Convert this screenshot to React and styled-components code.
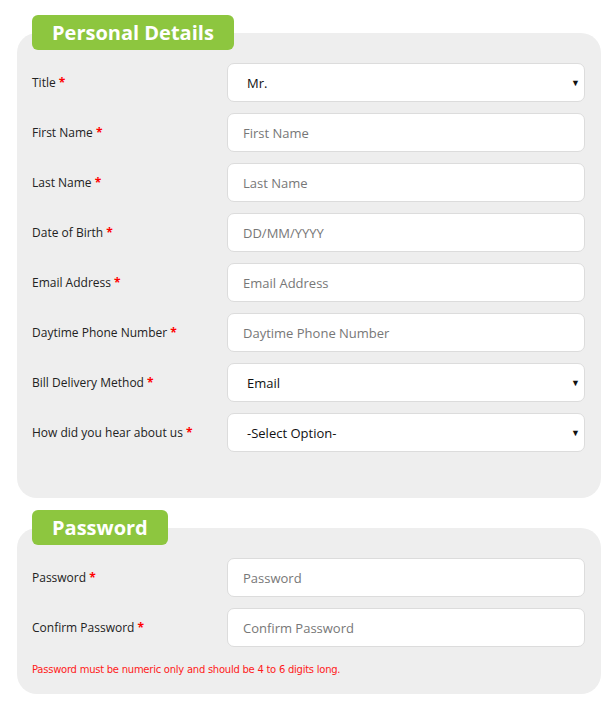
import React from "react";
import styled, { createGlobalStyle } from "styled-components";

const Global = createGlobalStyle`
  html, body { margin: 0; padding: 0; background: #fff; }
  body { font-family: "Open Sans", "Liberation Sans", sans-serif; }
  * { box-sizing: border-box; }
`;

const Page = styled.div`
  padding: 15px 15px 0 17px;
  display: flex;
  flex-direction: column;
  gap: 12px;
  width: 616px;
`;

const Section = styled.section`
  display: flex;
  flex-direction: column;
`;

const Badge = styled.div`
  position: relative;
  z-index: 1;
  align-self: flex-start;
  margin-left: 15px;
  height: 35px;
  padding: 0 20px;
  background: #8dc63f;
  border-radius: 6px;
  color: #fff;
  font-family: "Open Sans", sans-serif;
  font-weight: 700;
  font-size: 20px;
  line-height: 35px;
`;

const Panel = styled.div`
  margin-top: -17px;
  background: #eeeeee;
  border-radius: 20px;
  padding: ${(p) => p.$pad};
  display: flex;
  flex-direction: column;
  gap: 11px;
`;

const Row = styled.div`
  display: grid;
  grid-template-columns: 195px 358px;
  align-items: center;
`;

const Label = styled.label`
  font-family: "Open Sans", sans-serif;
  font-size: 12px;
  color: #222;
`;

const Star = styled.span`
  color: #ff0000;
  font-weight: 700;
`;

const Input = styled.input`
  height: 39px;
  width: 100%;
  border: 1px solid #dcdcdc;
  border-radius: 7px;
  background: #fff;
  padding: 0 15px;
  font-family: "Open Sans", sans-serif;
  font-size: 13px;
  color: #333;
  outline: none;
  &::placeholder { color: #777; }
`;

const SelectBox = styled.div`
  height: 39px;
  border: 1px solid #dcdcdc;
  border-radius: 7px;
  background: #fff;
  padding: 0 4px 0 19px;
  display: flex;
  align-items: center;
  justify-content: space-between;
  font-family: "Open Sans", sans-serif;
  font-size: 13px;
  color: #111;
`;

const Arrow = styled.span`
  font-size: 9px;
  color: #111;
`;

const Note = styled.p`
  margin: 6px 0 0;
  font-family: "DejaVu Sans", sans-serif;
  font-size: 10px;
  line-height: 12px;
  letter-spacing: -0.25px;
  color: #ff1a1a;
`;

const Field = ({ label, placeholder, select }) => (
  <Row>
    <Label>
      {label} <Star>*</Star>
    </Label>
    {select ? (
      <SelectBox>
        <span>{select}</span>
        <Arrow>▼</Arrow>
      </SelectBox>
    ) : (
      <Input placeholder={placeholder} />
    )}
  </Row>
);

export default function App() {
  return (
    <>
      <Global />
      <Page>
        <Section>
          <Badge>Personal Details</Badge>
          <Panel $pad="30px 16px 46px 15px">
            <Field label="Title" select="Mr." />
            <Field label="First Name" placeholder="First Name" />
            <Field label="Last Name" placeholder="Last Name" />
            <Field label="Date of Birth" placeholder="DD/MM/YYYY" />
            <Field label="Email Address" placeholder="Email Address" />
            <Field label="Daytime Phone Number" placeholder="Daytime Phone Number" />
            <Field label="Bill Delivery Method" select="Email" />
            <Field label="How did you hear about us" select="-Select Option-" />
          </Panel>
        </Section>
        <Section>
          <Badge>Password</Badge>
          <Panel $pad="30px 16px 18px 15px">
            <Field label="Password" placeholder="Password" />
            <Field label="Confirm Password" placeholder="Confirm Password" />
            <Note>Password must be numeric only and should be 4 to 6 digits long.</Note>
          </Panel>
        </Section>
      </Page>
    </>
  );
}
